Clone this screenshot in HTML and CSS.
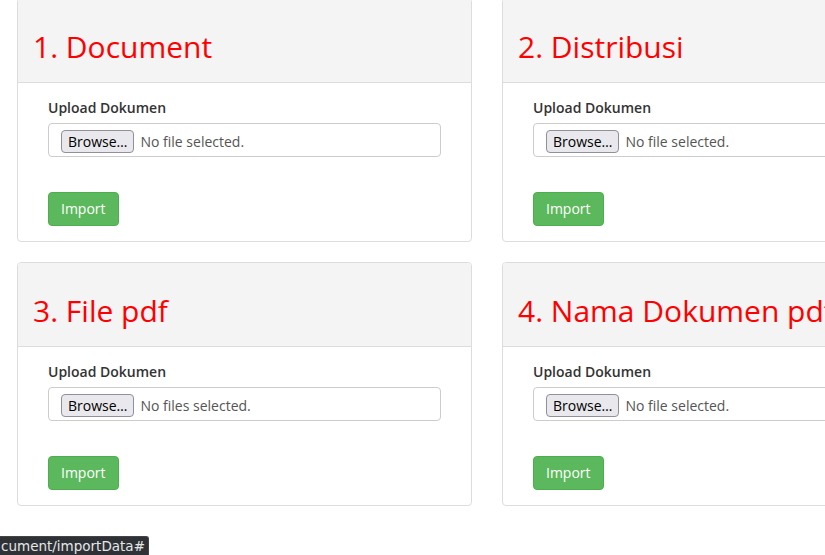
FILE: index.html
```html
<!DOCTYPE html>
<html>
<head>
<meta charset="utf-8">
<link rel="stylesheet" href="styles.css">
</head>
<body>
<div class="page">
  <div class="grid">
    <div class="card">
      <div class="card-head"><h2 class="title">1. Document</h2></div>
      <div class="card-body">
        <label class="label">Upload Dokumen</label>
        <div class="file"><span class="browse">Browse…</span><span class="file-text">No file selected.</span></div>
        <button class="btn">Import</button>
      </div>
    </div>
    <div class="card">
      <div class="card-head"><h2 class="title">2. Distribusi</h2></div>
      <div class="card-body">
        <label class="label">Upload Dokumen</label>
        <div class="file"><span class="browse">Browse…</span><span class="file-text">No file selected.</span></div>
        <button class="btn">Import</button>
      </div>
    </div>
    <div class="card">
      <div class="card-head"><h2 class="title">3. File pdf</h2></div>
      <div class="card-body">
        <label class="label">Upload Dokumen</label>
        <div class="file"><span class="browse">Browse…</span><span class="file-text">No files selected.</span></div>
        <button class="btn">Import</button>
      </div>
    </div>
    <div class="card">
      <div class="card-head"><h2 class="title">4. Nama Dokumen pdf</h2></div>
      <div class="card-body">
        <label class="label">Upload Dokumen</label>
        <div class="file"><span class="browse">Browse…</span><span class="file-text">No file selected.</span></div>
        <button class="btn">Import</button>
      </div>
    </div>
  </div>
</div>
<div class="status">cument/importData#</div>
</body>
</html>
```
FILE: styles.css
```css
html, body {
  margin: 0;
  padding: 0;
  background: #fff;
  overflow: hidden;
  width: 825px;
  height: 555px;
}
body {
  font-family: "Open Sans", "Liberation Sans", sans-serif;
  font-size: 14px;
  line-height: 20px;
  color: #333;
}
.page {
  padding-left: 17px;
  margin-top: -2px;
}
.grid {
  display: grid;
  grid-template-columns: 455px 455px;
  column-gap: 30px;
  row-gap: 20px;
  width: 940px;
}
.card {
  border: 1px solid #ddd;
  border-radius: 4px;
  background: #fff;
  overflow: hidden;
}
.card-head {
  background: #f4f4f4;
  border-bottom: 1px solid #ddd;
  padding: 10px 15px;
  white-space: nowrap;
}
.title {
  margin: 21px 0 9px;
  font-size: 30px;
  line-height: 33px;
  font-weight: 400;
  color: #ff0000;
}
.card-body {
  padding: 15px 30px;
  display: flex;
  flex-direction: column;
  align-items: flex-start;
}
.label {
  font-weight: 600;
  margin-bottom: 5px;
  color: #333;
}
.file {
  box-sizing: border-box;
  width: 100%;
  height: 34px;
  border: 1px solid #ccc;
  border-radius: 4px;
  padding: 6px 12px 0;
  display: flex;
  align-items: flex-start;
  gap: 6px;
  color: #555;
  white-space: nowrap;
}
.browse {
  box-sizing: border-box;
  height: 23px;
  line-height: 21px;
  padding: 0 6px;
  border: 1px solid #8f8f9d;
  border-radius: 4px;
  background: #e9e9ed;
  color: #000;
}
.file-text {
  color: #555;
  line-height: 23px;
}
.btn {
  margin-top: 35px;
  height: 34px;
  padding: 6px 12px;
  border: 1px solid #4cae4c;
  border-radius: 4px;
  background: #5cb85c;
  color: #fff;
  font-family: inherit;
  font-size: 14px;
  line-height: 20px;
}
.status {
  position: fixed;
  left: 0;
  bottom: 0;
  height: 18px;
  padding: 0 3px 0 1px;
  background: #2e3236;
  color: #e6e6e6;
  border: 1px solid #444;
  border-left: none;
  border-bottom: none;
  border-top-right-radius: 3px;
  font-family: "DejaVu Sans", sans-serif;
  font-size: 13.5px;
  line-height: 18px;
}
```
